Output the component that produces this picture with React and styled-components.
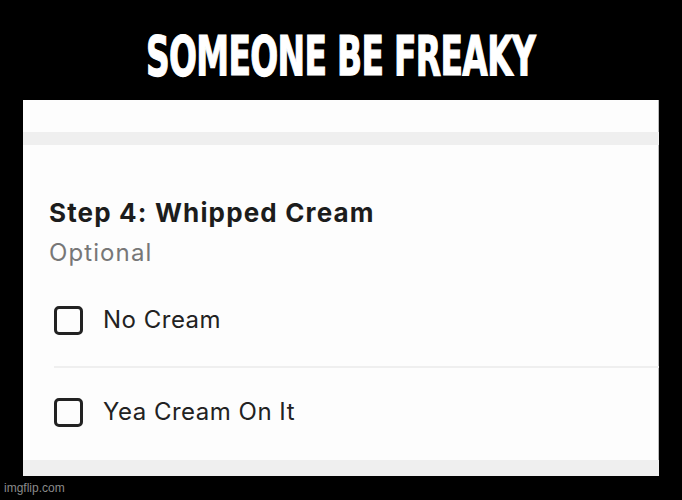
import React from "react";
import styled, { createGlobalStyle } from "styled-components";

const Global = createGlobalStyle`
	html, body {
		margin: 0;
		background: #000;
	}
	#root {
		width: 682px;
		height: 500px;
	}
`;

const Page = styled.div`
	width: 682px;
	height: 500px;
	background: #000;
	display: flex;
	flex-direction: column;
	overflow: hidden;
`;

const Header = styled.div`
	height: 100px;
	box-sizing: border-box;
	padding-top: 12px;
	display: flex;
	align-items: center;
	justify-content: center;
`;

const Caption = styled.h1`
	margin: 0;
	color: #fff;
	font-family: "DejaVu Sans Condensed", "DejaVu Sans", sans-serif;
	font-weight: bold;
	font-size: 55px;
	line-height: 1;
	letter-spacing: -1px;
	-webkit-text-stroke: 1.2px #fff;
	transform: scaleX(0.665);
	white-space: nowrap;
`;

const Card = styled.div`
	margin: 0 23px 0 23px;
	width: 636px;
	height: 376px;
	background: #fdfdfd;
	box-shadow: inset -1px -1px 0 #bcbcbc;
	display: flex;
	flex-direction: column;
	font-family: Inter, "Noto Sans", sans-serif;
`;

const Band = styled.div`
	height: ${p => p.h}px;
	margin-top: ${p => p.top || 0}px;
	background: #efefef;
	flex-shrink: 0;
`;

const Section = styled.div`
	flex: 1;
	padding: 52px 0 0 26px;
`;

const StepTitle = styled.div`
	font-size: 26px;
	font-weight: 700;
	letter-spacing: 1.15px;
	color: #1c1c1c;
	line-height: 32px;
`;

const Hint = styled.div`
	font-size: 24px;
	letter-spacing: 1.1px;
	color: #777;
	line-height: 30px;
	margin-top: 9px;
`;

const List = styled.div`
	margin-top: 37px;
`;

const Option = styled.label`
	display: flex;
	align-items: center;
	gap: 20px;
	padding: ${p => (p.first ? "0 0 31px" : "29px 0 0")};
	margin-left: 5px;
	border-bottom: ${p => (p.first ? "2px solid #efefef" : "none")};
	font-size: 24px;
	letter-spacing: 0.5px;
	color: #222;
	line-height: 30px;
`;

const Box = styled.span`
	width: 23px;
	height: 23px;
	border: 3px solid #222;
	border-radius: 5px;
	flex-shrink: 0;
`;

const Footer = styled.div`
	flex: 1;
	display: flex;
	align-items: center;
	padding-left: 4px;
	font-family: "Liberation Sans", Arial, sans-serif;
	font-size: 12px;
	color: #8a8a8a;
`;

const options = ["No Cream", "Yea Cream On It"];

export default function App() {
	return (
		<Page>
			<Global />
			<Header>
				<Caption>SOMEONE BE FREAKY</Caption>
			</Header>
			<Card>
				<Band h={13} top={32} />
				<Section>
					<StepTitle>Step 4: Whipped Cream</StepTitle>
					<Hint>Optional</Hint>
					<List>
						{options.map((label, i) => (
							<Option key={label} first={i === 0}>
								<Box />
								{label}
							</Option>
						))}
					</List>
				</Section>
				<Band h={16} />
			</Card>
			<Footer>imgflip.com</Footer>
		</Page>
	);
}
